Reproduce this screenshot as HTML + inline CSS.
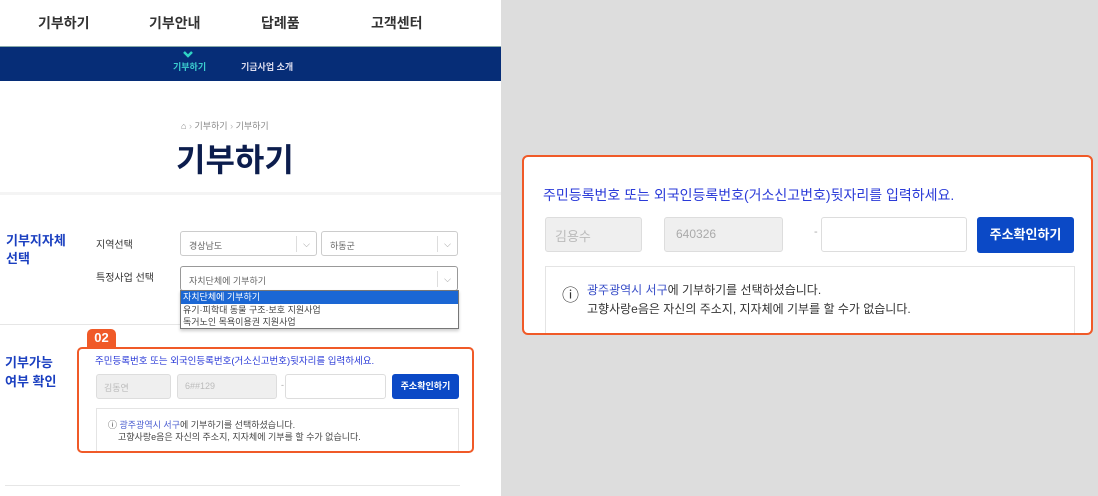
<!DOCTYPE html><html><head><meta charset="utf-8"><style>
*{margin:0;padding:0;box-sizing:border-box}
body{width:1098px;height:496px;position:relative;overflow:hidden;background:#ddd;font-family:"Liberation Sans","Noto Sans CJK KR",sans-serif}
.a{position:absolute;white-space:nowrap}
#L{position:absolute;left:0;top:0;width:501px;height:496px;background:#fff;overflow:hidden}
.nav{font-size:14px;font-weight:bold;color:#333;top:13px}
.sel{position:absolute;border:1px solid #ccc;border-radius:3px;background:#fff;font-size:9px;color:#666;padding:7px 0 0 8px}
.sel i{position:absolute;right:0;top:4px;height:16px;width:20px;border-left:1px solid #ddd;font-style:normal;color:#999;text-align:center;font-size:9px;line-height:16px}
.inp{position:absolute;border:1px solid #ddd;border-radius:3px;background:#efefef}
</style></head><body>
<div id="L">
<div class="a nav" style="left:38px">기부하기</div>
<div class="a nav" style="left:149px">기부안내</div>
<div class="a nav" style="left:261px">답례품</div>
<div class="a nav" style="left:371px">고객센터</div>
<div class="a" style="left:0;top:46px;width:501px;height:35px;background:#062d77;border-top:1px solid #8aa"></div>
<svg class="a" style="left:183px;top:51px" width="10" height="7" viewBox="0 0 10 7"><path d="M1 1l4 4 4-4" stroke="#2fd4c4" stroke-width="2.5" fill="none"/></svg>
<div class="a" style="left:173px;top:60px;color:#3ccfd0;font-size:9px;font-weight:bold">기부하기</div>
<div class="a" style="left:241px;top:60px;color:#dde;font-size:9px;font-weight:bold">기금사업 소개</div>
<div class="a" style="left:181px;top:119px;font-size:9px;color:#888">⌂ <span style="color:#bbb">›</span> 기부하기 <span style="color:#bbb">›</span> 기부하기</div>
<div class="a" style="left:176px;top:135px;font-size:32px;font-weight:bold;color:#0c1d4d">기부하기</div>
<div class="a" style="left:0;top:192px;width:501px;height:3px;background:#f4f4f4"></div>
<div class="a" style="left:6px;top:232px;font-size:13px;font-weight:bold;color:#1a3fc0;line-height:18px">기부지자체<br>선택</div>
<div class="a" style="left:96px;top:236px;font-size:10px;color:#333">지역선택</div>
<div class="a" style="left:96px;top:269px;font-size:10px;color:#333">특정사업 선택</div>
<div class="sel" style="left:180px;top:231px;width:137px;height:25px">경상남도<i>⌵</i></div>
<div class="sel" style="left:321px;top:231px;width:137px;height:25px">하동군<i>⌵</i></div>
<div class="sel" style="left:180px;top:266px;width:278px;height:25px;border-color:#999">자치단체에 기부하기<i>⌵</i></div>
<div class="a" style="left:0;top:324px;width:180px;height:1px;background:#e6e6e6"></div>
<div class="a" style="left:180px;top:290px;width:279px;height:39px;border:1px solid #777;background:#fff;font-size:9px;color:#444;line-height:12px;box-shadow:0 2px 3px rgba(0,0,0,.2)">
<div style="background:#1b67d4;color:#fff;padding-left:2px;height:13px">자치단체에 기부하기</div>
<div style="padding-left:2px">유기·피학대 동물 구조·보호 지원사업</div>
<div style="padding-left:2px">독거노인 목욕이용권 지원사업</div></div>
<div class="a" style="left:87px;top:329px;width:29px;height:18px;background:#f05a28;border-radius:5px 5px 0 0;color:#fff;font-weight:bold;font-size:13px;text-align:center;line-height:18px">02</div>
<div class="a" style="left:5px;top:353px;font-size:13px;font-weight:bold;color:#1a3fc0;line-height:19px">기부가능<br>여부 확인</div>
<div class="a" style="left:77px;top:347px;width:397px;height:106px;border:2px solid #f05a28;border-radius:5px;background:#fff;overflow:hidden">
<div style="position:absolute;left:17px;top:59px;width:363px;height:60px;border:1px solid #e4e4e4"></div></div>
<div class="a" style="left:95px;top:353px;font-size:9.5px;color:#2a3ad8">주민등록번호 또는 외국인등록번호(거소신고번호)뒷자리를 입력하세요.</div>
<div class="inp" style="left:96px;top:374px;width:75px;height:25px"></div>
<div class="a" style="left:104px;top:381px;font-size:9px;color:#bbb">김동연</div>
<div class="inp" style="left:177px;top:374px;width:100px;height:25px"></div>
<div class="a" style="left:185px;top:381px;font-size:9px;color:#bbb">6##129</div>
<div class="a" style="left:281px;top:380px;font-size:9px;color:#aaa">-</div>
<div class="inp" style="left:285px;top:374px;width:101px;height:25px;background:#fff"></div>
<div class="a" style="left:392px;top:374px;width:67px;height:25px;background:#0b49c6;border-radius:3px;color:#fff;font-size:9px;font-weight:bold;text-align:center;line-height:25px">주소확인하기</div>
<div class="a" style="left:108px;top:419px;font-size:9px;color:#444;line-height:12px">ⓘ <span style="color:#4a5dd0">광주광역시 서구</span>에 기부하기를 선택하셨습니다.<br>&nbsp;&nbsp;&nbsp;&nbsp;고향사랑e음은 자신의 주소지, 지자체에 기부를 할 수가 없습니다.</div>
<div class="a" style="left:5px;top:485px;width:455px;height:1px;background:#e6e6e6"></div>
</div>
<div class="a" style="left:522px;top:155px;width:571px;height:180px;border:2px solid #f05a28;border-radius:6px;background:#fff;overflow:hidden">
<div style="position:absolute;left:21px;top:109px;width:530px;height:70px;border:1px solid #e4e4e4"></div></div>
<div class="a" style="left:543px;top:185px;font-size:14px;color:#2a3ad8">주민등록번호 또는 외국인등록번호(거소신고번호)뒷자리를 입력하세요.</div>
<div class="inp" style="left:545px;top:217px;width:97px;height:35px"></div>
<div class="a" style="left:555px;top:226px;font-size:13px;color:#bbb">김용수</div>
<div class="inp" style="left:664px;top:217px;width:119px;height:35px"></div>
<div class="a" style="left:676px;top:227px;font-size:12px;color:#aaa">640326</div>
<div class="a" style="left:814px;top:226px;font-size:11px;color:#aaa">-</div>
<div class="inp" style="left:821px;top:217px;width:146px;height:35px;background:#fff"></div>
<div class="a" style="left:977px;top:217px;width:97px;height:36px;background:#0b49c6;border-radius:3px;color:#fff;font-size:13px;font-weight:bold;text-align:center;line-height:36px">주소확인하기</div>
<div class="a" style="left:562px;top:281px;font-size:17px;color:#333">ⓘ</div>
<div class="a" style="left:587px;top:281px;font-size:12px;color:#333;line-height:19px"><span style="color:#3a4fc8">광주광역시 서구</span>에 기부하기를 선택하셨습니다.<br>고향사랑e음은 자신의 주소지, 지자체에 기부를 할 수가 없습니다.</div>
</body></html>
